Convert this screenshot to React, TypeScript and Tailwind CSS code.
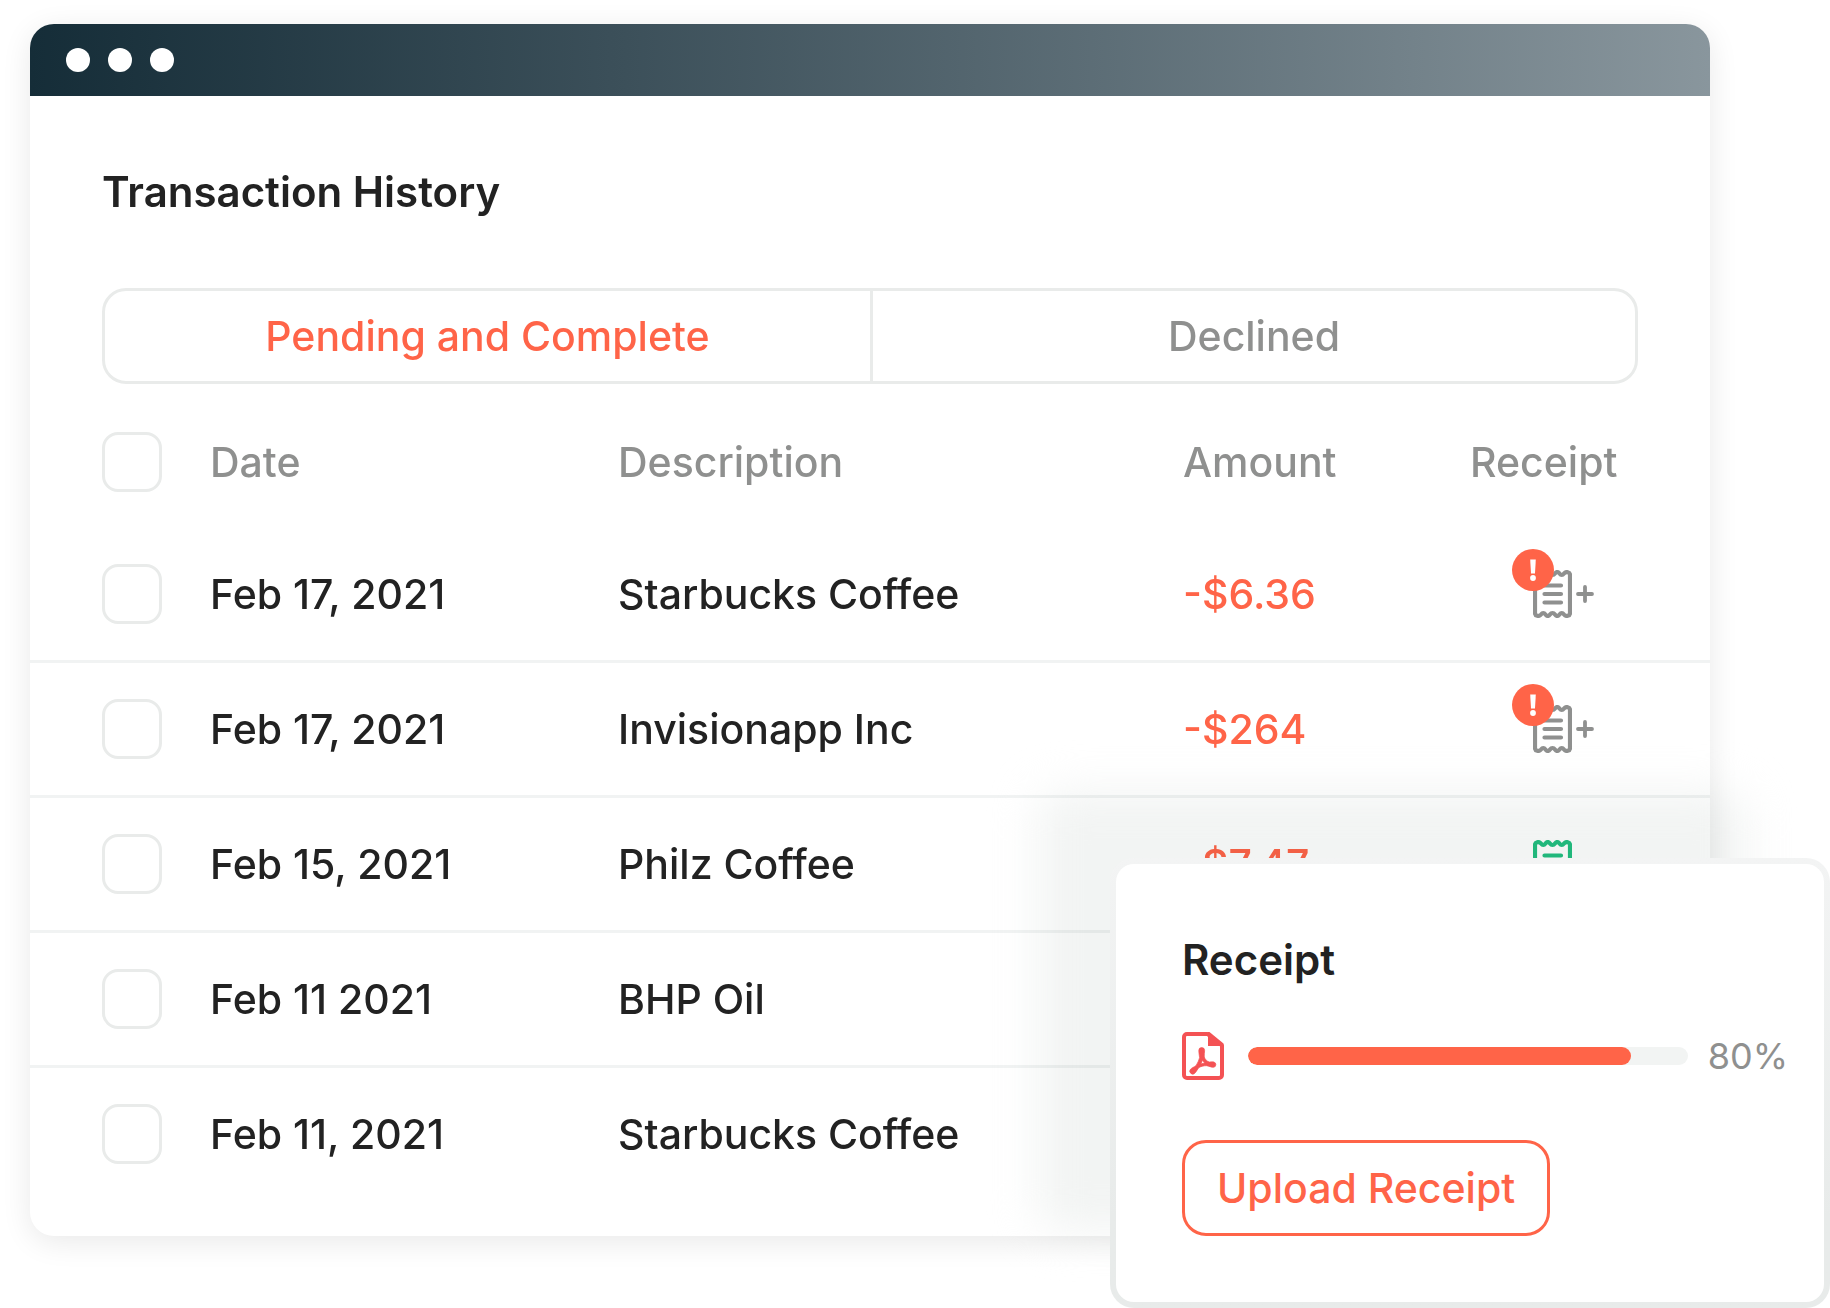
import clsx from "clsx";

interface Transaction {
  date: string;
  description: string;
  amount: string;
  receipt: "missing" | "attached";
}

const transactions: Transaction[] = [
  { date: "Feb 17, 2021", description: "Starbucks Coffee", amount: "-$6.36", receipt: "missing" },
  { date: "Feb 17, 2021", description: "Invisionapp Inc", amount: "-$264", receipt: "missing" },
  { date: "Feb 15, 2021", description: "Philz Coffee", amount: "-$7.47", receipt: "attached" },
  { date: "Feb 11 2021", description: "BHP Oil", amount: "", receipt: "attached" },
  { date: "Feb 11, 2021", description: "Starbucks Coffee", amount: "", receipt: "attached" }
];

const uploadProgress = 87;

function CheckBox({ label }: { label: string }) {
  return (
    <input
      type="checkbox"
      aria-label={label}
      className="block size-[60px] appearance-none rounded-2xl border-3 border-[#e9ebea] bg-white checked:bg-[#ff6448]"
    />
  );
}

function ReceiptIcon({ className }: { className?: string }) {
  return (
    <svg
      viewBox="0 0 39 48"
      className={clsx("h-12 w-[39px]", className)}
      fill="none"
      stroke="currentColor"
      strokeWidth="4.2"
      strokeLinecap="round"
      strokeLinejoin="round"
      aria-hidden="true"
    >
      <path d="M2 43V5c0-3 4-4 6-1.5 1.500 2 3 2 4.500 0s3-2 4.500 0c1.500 2 3.500 2 5 0s3-2 4.500 0 3 2 4.500 0C33 1 37 2 37 5v38c0 3-4 4-6 1.500-1.500-2-3-2-4.500 0s-3 2-4.500 0-3.500-2-5 0-3 2-4.500 0-3-2-4.500 0C6 47 2 46 2 43Z" />
      <path d="M11.500 15.500H28M11.500 24H28M11.500 32.500H28" />
    </svg>
  );
}

function ReceiptCell({ receipt }: { receipt: Transaction["receipt"] }) {
  if (receipt === "attached") {
    return <ReceiptIcon className="text-[#22c081]" />;
  }

  return (
    <button type="button" aria-label="Add receipt" className="relative flex items-center gap-1 text-[#8f908f]">
      <ReceiptIcon />
      <svg
        viewBox="0 0 18 18"
        className="size-[18px]"
        fill="none"
        stroke="currentColor"
        strokeWidth="3.8"
        strokeLinecap="round"
        aria-hidden="true"
      >
        <path d="M9 2v14M2 9h14" />
      </svg>
      <svg viewBox="0 0 42 42" className="absolute -top-[21px] -left-[21px] size-[42px]" aria-hidden="true">
        <circle cx="21" cy="21" r="21" fill="#ff6448" />
        <path d="M18.200 10.500h5.600l-.8 14h-4z" fill="#fff" />
        <circle cx="21" cy="29" r="2.9" fill="#fff" />
      </svg>
    </button>
  );
}

function PdfIcon() {
  return (
    <svg viewBox="0 0 42 48" className="h-12 w-[42px] flex-none" fill="#f45254" aria-hidden="true">
      <path
        d="M5 2h20.500L40 13.500V43a3 3 0 0 1-3 3H5a3 3 0 0 1-3-3V5a3 3 0 0 1 3-3Z"
        fill="none"
        stroke="#f45254"
        strokeWidth="4"
        strokeLinejoin="round"
      />
      <path d="M26 0v14h15.500v-2.500L27.500 0Z" />
      <path
        fillRule="evenodd"
        stroke="#f45254"
        strokeWidth=".7"
        d="M16.800 18.500a2.900 2.900 0 0 1 5.800 0c0 2-.6 4.500-.3 6.500.8 2.500 2.500 4.200 5 5 1.500.2 3-.4 4.500 0a2.700 2.700 0 0 1-.3 5.300c-2.500 0-4.500-1.300-7-1.600-3 0-5 .7-7.500 1.700-1.500 1.500-2.200 3.800-4 5.600a2.900 2.900 0 0 1-4.500-3.700c1.500-1.800 3.900-2.200 5.600-3.800 1.500-2.600 2.800-5 3.500-7.800-.2-2.400-.8-4.400-.8-7.200ZM20.500 28.300l-1.600 3.600 3.700-.9Z"
      />
    </svg>
  );
}

function ReceiptCard() {
  return (
    <section className="absolute right-0 bottom-0 w-[720px] rounded-3xl bg-linear-to-b from-[#f3f4f4] to-[#e8ebea] to-80% p-1.5">
      <div className="rounded-[18px] bg-white pt-[72px] pr-9 pb-[66px] pl-[66px]">
        <h2 className="text-[42px] leading-[48px] font-semibold">Receipt</h2>
        <div className="mt-12 flex items-center">
          <PdfIcon />
          <div
            className="ml-6 h-[18px] flex-1 overflow-hidden rounded-full bg-[#f2f4f3]"
            role="progressbar"
            aria-label="Receipt upload"
            aria-valuenow={80}
          >
            <div className="h-full rounded-full bg-[#ff6448]" style={{ width: `${uploadProgress}%` }} />
          </div>
          <span className="ml-5 text-[36px] leading-[48px] text-[#8f908f]">80%</span>
        </div>
        <button
          type="button"
          className="mt-[60px] h-24 rounded-3xl border-3 border-[#ff6448] px-8 text-[41px] leading-[48px] font-medium text-[#ff6448]"
        >
          Upload Receipt
        </button>
      </div>
    </section>
  );
}

export default function App() {
  return (
    <div className="relative min-h-screen overflow-hidden bg-white pt-6 pr-[120px] pb-[72px] pl-[30px] font-['Inter',sans-serif] text-[#222]">
      <main className="overflow-hidden rounded-3xl bg-white shadow-[0_6px_30px_rgba(0,0,0,0.09)]">
        <div className="flex h-[72px] items-center gap-[18px] bg-linear-to-r from-[#152d38] to-[#89969d] pl-9">
          <span className="size-6 rounded-full bg-white" />
          <span className="size-6 rounded-full bg-white" />
          <span className="size-6 rounded-full bg-white" />
        </div>

        <div className="px-[72px] pt-[72px]">
          <h1 className="text-[42px] leading-[48px] font-semibold">Transaction History</h1>
          <div className="mt-[72px] grid h-24 grid-cols-2 rounded-3xl border-3 border-[#e9ebea] text-[41px] leading-[48px] font-medium">
            <button type="button" className="text-[#ff6448]">
              Pending and Complete
            </button>
            <button type="button" className="border-l-3 border-[#e9ebea] text-[#8f908f]">
              Declined
            </button>
          </div>
        </div>

        <table className="mt-12 mb-9 w-full table-fixed border-separate border-spacing-0 text-left text-[41px] leading-[48px]">
          <colgroup>
            <col className="w-[180px]" />
            <col className="w-[408px]" />
            <col className="w-[565px]" />
            <col className="w-[287px]" />
            <col />
          </colgroup>
          <thead className="text-[#8f908f]">
            <tr className="h-24 *:pb-9 *:font-medium">
              <th className="pl-[72px]">
                <CheckBox label="Select all transactions" />
              </th>
              <th>Date</th>
              <th>Description</th>
              <th>Amount</th>
              <th>Receipt</th>
            </tr>
          </thead>
          <tbody className="font-medium">
            {transactions.map((item, index) => (
              <tr
                key={index}
                className="h-[135px] *:border-b-3 *:border-[#f1f3f3] last:h-[132px] last:*:border-b-0"
              >
                <td className="pl-[72px]">
                  <CheckBox label={`Select ${item.description}, ${item.date}`} />
                </td>
                <td>{item.date}</td>
                <td>{item.description}</td>
                <td className="text-[#ff6448]">{item.amount}</td>
                <td className="pl-[63px]">
                  <ReceiptCell receipt={item.receipt} />
                </td>
              </tr>
            ))}
          </tbody>
        </table>
      </main>

      {/* soft shade cast by the receipt card */}
      <div className="pointer-events-none absolute right-[84px] bottom-[78px] h-[438px] w-[708px] rounded-3xl bg-[#f2f4f3] mix-blend-multiply blur-[22px]" />
      <ReceiptCard />
    </div>
  );
}
